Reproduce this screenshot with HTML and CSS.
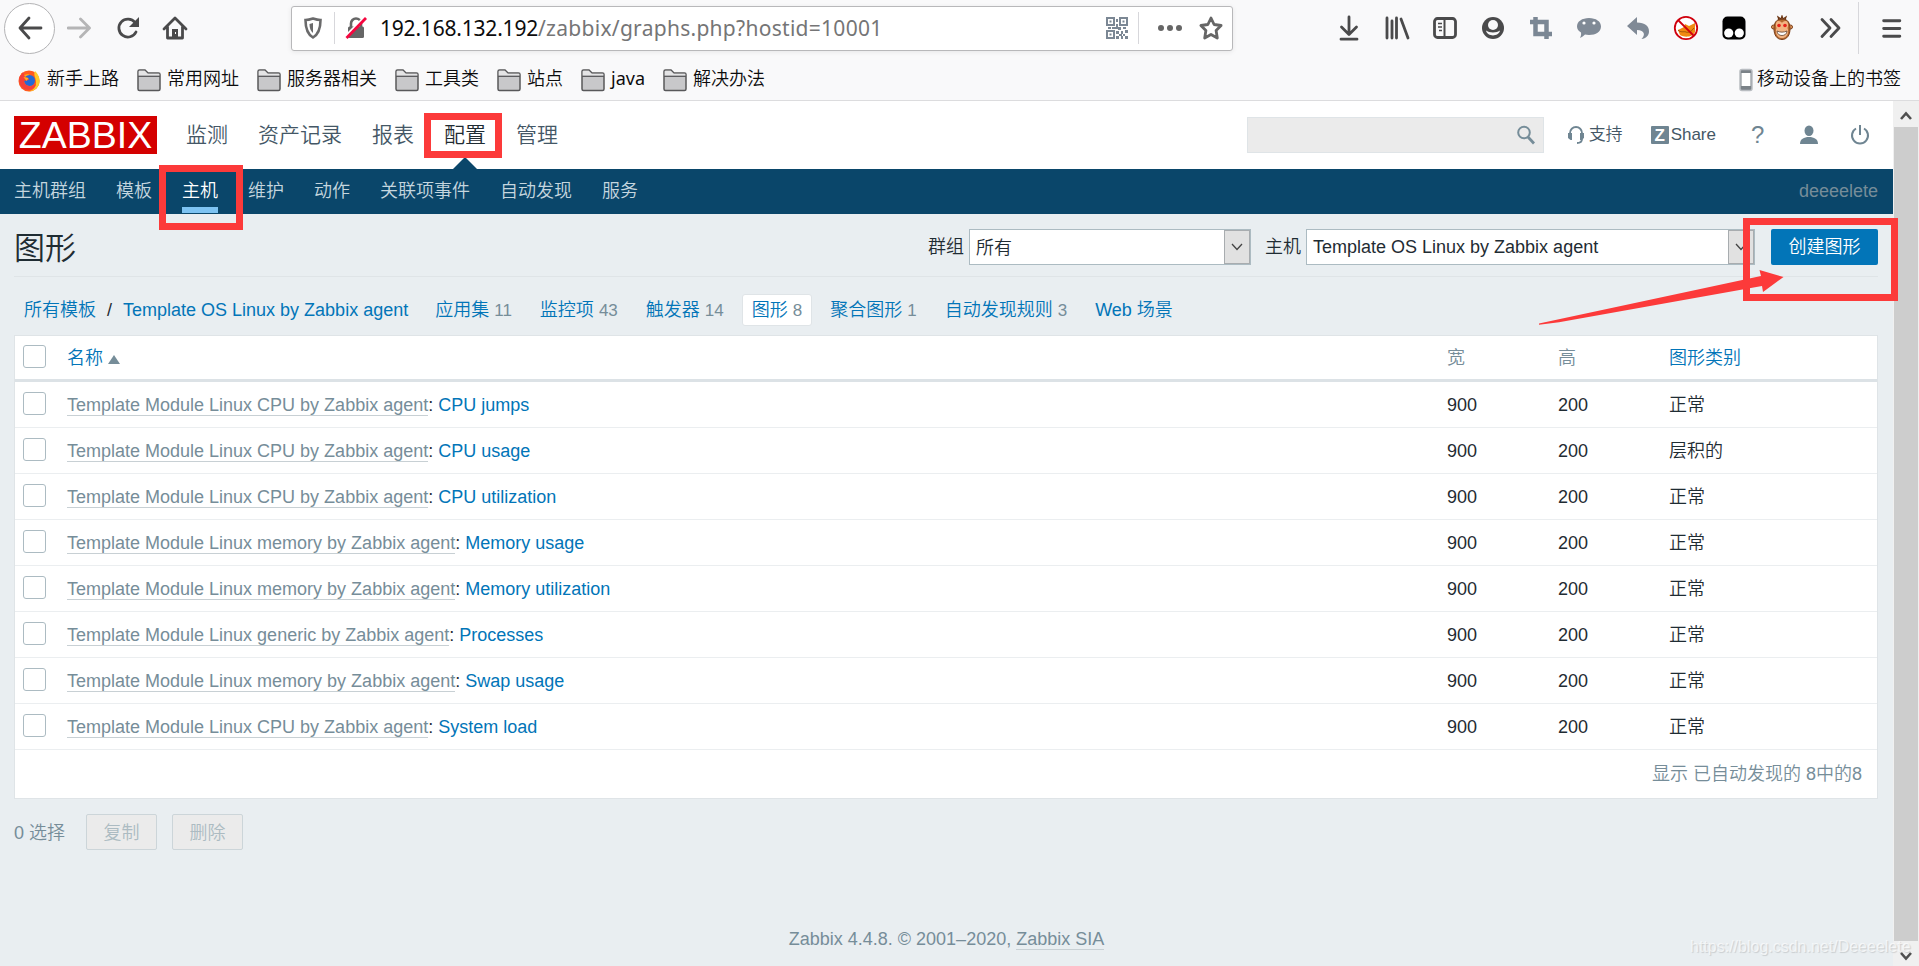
FILE: index.html
```
<!DOCTYPE html>
<html lang="zh-CN">
<head>
  <meta charset="UTF-8">
  <meta name="viewport" content="width=device-width, initial-scale=1.0">
  <title>图形</title>

  <link rel="stylesheet" href="styles.css">
</head>
<body>
  <div class="browser">
    <div class="toolbar">
      <span class="back-btn">
        <svg width="26" height="26" viewBox="0 0 26 26"><path d="M24 13H3M12 3L3 13l9 10" class="line dark w3"/></svg>
      </span>
      <svg class="forward" width="26" height="26" viewBox="0 0 26 26"><path d="M1 13h21M13.500 4l9 9-9 9" class="line pale w3"/></svg>
      <svg class="reload" width="26" height="26" viewBox="0 0 26 26"><path d="M20 7.500A9 9 0 1 0 21 17" class="line dark w3"/><path d="M24 2v10H14z" fill="#4a4a4b"/></svg>
      <svg class="home" width="26" height="26" viewBox="0 0 26 26"><path d="M2 14L13 3l11 11M5.500 12v11h15V12" class="line dark w3"/><path d="M10 23v-9h6v9z" fill="#4a4a4b"/><path d="M13.500 17v2" stroke="#fff" stroke-width="1"/></svg>

      <div class="url-bar">
        <svg class="shield" width="20" height="22" viewBox="0 0 20 22"><path d="M10 1.500c3 1 5 1.500 7.500 1.500 0 8-1.500 14-7.500 17.500C4 17 2.500 11 2.500 3 5 3 7 2.500 10 1.500z" fill="none" stroke="#6a6a6b" stroke-width="2.600"/><path d="M10 6v10c-2.500-2-3.500-5-3.500-9z" fill="#6a6a6b"/></svg>
        <span class="url-sep"></span>
        <svg class="lock" width="24" height="24" viewBox="0 0 24 24"><path d="M7 11V7.500a5 5 0 0 1 10 0V11" fill="none" stroke="#666" stroke-width="2.600"/><rect x="4" y="10.500" width="16" height="11.500" rx="1.500" fill="#666"/><path d="M1 21L20 2" stroke="#fff" stroke-width="3"/><path d="M2.500 22L22 2" stroke="#f5063f" stroke-width="2.800"/></svg>
        <span class="url"><b>192.168.132.192</b>/zabbix/graphs.php?hostid=10001</span>
        <svg class="qr" width="22" height="22" viewBox="0 0 22 22">
          <g fill="none" stroke="#7b8794" stroke-width="2"><path d="M1 1h7v7H1zM14 1h7v7h-7zM1 14h7v7H1z"/></g>
          <path fill="#7b8794" d="M3.500 3.500h2v2h-2zM16.500 3.500h2v2h-2zM3.500 16.500h2v2h-2zM10 2h2v3h-2zM10 7h2v5h-2zM2 10h3v2H2zM6 10h4v2H6zM12 10h3v3h-3zM17 10h3v2h-3zM10 14h3v3h-3zM15 14h2v3h-2zM19 13h3v3h-3zM13 17h3v2h-3zM10 19h3v3h-3zM17 17h2v2h-2zM15 19h2v3h-2zM19 19h3v3h-3z"/>
        </svg>
        <span class="url-sep"></span>
        <svg class="dots" width="26" height="8" viewBox="0 0 26 8"><g fill="#666"><circle cx="4" cy="4" r="3"/><circle cx="13" cy="4" r="3"/><circle cx="22" cy="4" r="3"/></g></svg>
        <svg class="star" width="26" height="26" viewBox="0 0 26 26"><path d="M13 3l3.100 6.500 7 1-5 5 1.200 7.500L13 19.500 6.700 23l1.200-7.500-5-5 7-1z" class="line w3" stroke="#666"/></svg>
      </div>

      <div class="tools">
        <svg viewBox="0 0 26 26"><path d="M13 2v17M5.500 12l7.500 7.500 7.500-7.500M5 24.200h16" class="line dark w3"/></svg>
        <svg viewBox="0 0 26 26"><path d="M3 3v20M8 6v17M12.500 3v20M17 4l7 19" class="line dark w3"/></svg>
        <svg viewBox="0 0 26 26"><rect x="2.500" y="3.500" width="21" height="19" rx="3" class="line dark w3"/><path d="M12.500 4v18" stroke="#4a4a4b" stroke-width="2"/><path d="M6 8.500h4M6 12h4M7 15.500h3" stroke="#4a4a4b" stroke-width="1.400"/></svg>
        <svg viewBox="0 0 26 26"><circle cx="13" cy="13" r="11" fill="#4a4a4b"/><circle cx="13" cy="10" r="5" fill="#f9f9fa"/><path d="M6 15.500c1.500 6.500 12.500 6.500 14 0-3 2.500-11 2.500-14 0z" fill="#f9f9fa"/></svg>
        <svg viewBox="0 0 26 26"><path d="M7.500 2v17H24M2 7h16.500v17" fill="none" stroke="#7b8794" stroke-width="4.500"/></svg>
        <svg viewBox="0 0 26 26"><path d="M13 3c7 0 12 3.500 12 8.500S20 20 13 20c-1.500 0-3-.2-4-.5C7.500 21 6 22 4 23c1-2 1.300-3.500 1-5.500-2.500-1.500-4-3.500-4-6C1 6.500 6 3 13 3z" fill="#808a96"/><circle cx="8" cy="8" r="1.600" fill="#fff"/><circle cx="18" cy="8" r="1.600" fill="#fff"/></svg>
        <svg viewBox="0 0 26 26"><path d="M12 2v5.500c8 0 12 3.500 12 9 0 4-3 7-7.500 7.500 4-3.500 3.500-9-4.500-9V20L2 11z" fill="#808a96"/></svg>
        <svg viewBox="0 0 26 26"><circle cx="13" cy="13" r="11.200" fill="#fff"/><path d="M5 15l6-3 1-3 4 2 6-3v9c-2 5-10 6-15 3z" fill="#f08a12"/><path d="M5 15c3 3 6 1 8 2s5 0 8-4" fill="none" stroke="#9c5308" stroke-width="1"/><circle cx="13" cy="13" r="11.200" fill="none" stroke="#d0000d" stroke-width="1.800"/><path d="M5 5l16 16" stroke="#d0000d" stroke-width="1.800"/></svg>
        <svg viewBox="0 0 26 26"><rect x="1.500" y="1.500" width="23" height="23" rx="5" fill="#000"/><circle cx="7.700" cy="18" r="4.600" fill="#fff"/><circle cx="18.300" cy="18" r="4.600" fill="#fff"/></svg>
        <svg viewBox="0 0 26 26"><circle cx="4.500" cy="12" r="2" fill="#e59a5e" stroke="#7a401b"/><circle cx="21.500" cy="12" r="2" fill="#e59a5e" stroke="#7a401b"/><path d="M13 4c6 0 8 4 8 10s-3 10.500-8 10.500S5 20 5 14s2-10 8-10z" fill="#b5682f" stroke="#7a401b"/><path d="M9.500 6c2 0 3 1 3.500 2 .5-1 1.500-2 3.500-2 3 0 3 5 2 7 2 5-1 10-5.500 10S5.500 18 7.500 13c-1-2-1-7 2-7z" fill="#f2b482"/><path d="M10 5l-1-3 3 2 1-3 1 3 3-2-1 3" fill="none" stroke="#6b3512" stroke-width="1.200"/><circle cx="10" cy="10.500" r="1.800" fill="#e5231b"/><circle cx="16" cy="10.500" r="1.800" fill="#e5231b"/><path d="M8 16c3 1.500 7 1.500 10 0 0 6-10 6-10 0z" fill="#fff" stroke="#60402b" stroke-width=".8"/></svg>
        <svg viewBox="0 0 26 26"><path d="M5 4.500l8 8.500-8 8.500M14 4.500l8 8.500-8 8.500" class="line dark w3"/></svg>
      </div>
      <svg class="menu" width="26" height="50" viewBox="0 0 26 50"><path d="M5 18h15.500M5 25.500h15.500M5 33h15.500" class="line dark w3"/></svg>
    </div>

    <div class="bookmarks">
      <span class="bookmark">
        <svg class="fox" width="24" height="24" viewBox="0 0 24 24"><circle cx="12" cy="13" r="10.500" fill="#ff5a1f"/><path d="M18 3c4 4 5 8 4.500 12C21 21 16 23.500 11 23.500c5-1 8-4 8-9 0-5-3-7-1-11.500z" fill="#ffca28"/><path d="M4 5l3 2 4-1 5 3 1 6-4 4H8l-4-5z" fill="#ffa51a"/><circle cx="12.500" cy="12.500" r="5.500" fill="#2468d6"/><path d="M3 8c-2 5 0 10 4 13 5 2 11 0 12-5-5 4-11 2-12-3l5-1c0-2-2-3-4-3L6 4z" fill="#f5403a"/><path d="M6.500 9l5 1-2 3z" fill="#ffb21c"/></svg>
        <span>新手上路</span>
      </span>
      <span class="bookmark"><svg width="24" height="24" viewBox="0 0 24 24"><use href="#folder"/></svg><span>常用网址</span></span>
      <span class="bookmark"><svg width="24" height="24" viewBox="0 0 24 24"><use href="#folder"/></svg><span>服务器相关</span></span>
      <span class="bookmark"><svg width="24" height="24" viewBox="0 0 24 24"><use href="#folder"/></svg><span>工具类</span></span>
      <span class="bookmark"><svg width="24" height="24" viewBox="0 0 24 24"><use href="#folder"/></svg><span>站点</span></span>
      <span class="bookmark latin"><svg width="24" height="24" viewBox="0 0 24 24"><use href="#folder"/></svg><span>java</span></span>
      <span class="bookmark"><svg width="24" height="24" viewBox="0 0 24 24"><use href="#folder"/></svg><span>解决办法</span></span>
      <span class="bookmark mobile"><svg width="14" height="24" viewBox="0 0 14 24"><rect x="1" y="1.500" width="12" height="21" rx="2" fill="#7b8288" stroke="#b9bdc1" stroke-width="1.500"/><path d="M2.500 5h9v13h-9z" fill="#fff"/></svg><span>移动设备上的书签</span></span>
    </div>
  </div>

  <div class="viewport">
    <div class="page">
      <header class="top-nav">
        <a class="logo">ZABBIX</a>
        <ul class="menu-main">
          <li>监测</li>
          <li>资产记录</li>
          <li>报表</li>
          <li class="selected">配置</li>
          <li>管理</li>
        </ul>
        <div class="search">
          <svg width="20" height="20" viewBox="0 0 20 20"><circle cx="8" cy="7.500" r="5.800" fill="none" stroke="#768d99" stroke-width="2"/><path d="M12 12l6 6.500" stroke="#768d99" stroke-width="2.800"/></svg>
        </div>
        <a class="top-link support"><svg width="18" height="20" viewBox="0 0 18 20"><path d="M3 12V8a6 6 0 0 1 12 0v6c0 3-2 4-5 4" fill="none" stroke="#6f8592" stroke-width="1.800"/><path d="M1 8h4v7H3.500L1 13zM13 8h4v5l-2.500 2H13z" fill="#6f8592"/></svg>支持</a>
        <a class="top-link share"><span class="z-icon">Z</span>Share</a>
        <a class="help">?</a>
        <svg class="user" width="20" height="20" viewBox="0 0 20 20"><ellipse cx="10" cy="5.700" rx="4.500" ry="5.200" fill="#6f8592"/><path d="M1 19c0-5 4-7 9-7s9 2 9 7z" fill="#6f8592"/></svg>
        <svg class="power" width="20" height="20" viewBox="0 0 20 20"><path d="M6 3.500a8 8 0 1 0 8 0M10 0v10" fill="none" stroke="#6f8592" stroke-width="2"/></svg>
      </header>

      <nav class="sub-nav">
        <ul>
          <li>主机群组</li>
          <li>模板</li>
          <li class="selected">主机</li>
          <li>维护</li>
          <li>动作</li>
          <li>关联项事件</li>
          <li>自动发现</li>
          <li>服务</li>
        </ul>
        <span class="server-name">deeeelete</span>
      </nav>

      <main>
        <div class="header-title">
          <h1>图形</h1>
          <label>群组</label>
          <div class="select group-select"><span>所有</span><i><svg width="12" height="8" viewBox="0 0 12 8"><path d="M1 1l5 5.500L11 1" fill="none" stroke="#444" stroke-width="1.300"/></svg></i></div>
          <label>主机</label>
          <div class="select host-select"><span>Template OS Linux by Zabbix agent</span><i><svg width="12" height="8" viewBox="0 0 12 8"><path d="M1 1l5 5.500L11 1" fill="none" stroke="#444" stroke-width="1.300"/></svg></i></div>
          <button class="btn-create">创建图形</button>
        </div>

        <div class="breadcrumbs">
          <a>所有模板</a>
          <span class="slash">/</span>
          <a class="template">Template OS Linux by Zabbix agent</a>
          <span class="tab"><a>应用集</a> <sub>11</sub></span>
          <span class="tab"><a>监控项</a> <sub>43</sub></span>
          <span class="tab"><a>触发器</a> <sub>14</sub></span>
          <span class="tab active"><a>图形</a> <sub>8</sub></span>
          <span class="tab"><a>聚合图形</a> <sub>1</sub></span>
          <span class="tab"><a>自动发现规则</a> <sub>3</sub></span>
          <span class="tab"><a>Web 场景</a></span>
        </div>

        <table class="list-table">
          <thead>
            <tr>
              <th class="col-check"><span class="checkbox"></span></th>
              <th><a>名称</a><span class="arrow-up"></span></th>
              <th class="col-size">宽</th>
              <th class="col-size">高</th>
              <th class="col-type"><a>图形类别</a></th>
            </tr>
          </thead>
          <tbody>
            <tr>
              <td><span class="checkbox"></span></td>
              <td><span class="link-alt">Template Module Linux CPU by Zabbix agent</span>: <a>CPU jumps</a></td>
              <td>900</td><td>200</td><td>正常</td>
            </tr>
            <tr>
              <td><span class="checkbox"></span></td>
              <td><span class="link-alt">Template Module Linux CPU by Zabbix agent</span>: <a>CPU usage</a></td>
              <td>900</td><td>200</td><td>层积的</td>
            </tr>
            <tr>
              <td><span class="checkbox"></span></td>
              <td><span class="link-alt">Template Module Linux CPU by Zabbix agent</span>: <a>CPU utilization</a></td>
              <td>900</td><td>200</td><td>正常</td>
            </tr>
            <tr>
              <td><span class="checkbox"></span></td>
              <td><span class="link-alt">Template Module Linux memory by Zabbix agent</span>: <a>Memory usage</a></td>
              <td>900</td><td>200</td><td>正常</td>
            </tr>
            <tr>
              <td><span class="checkbox"></span></td>
              <td><span class="link-alt">Template Module Linux memory by Zabbix agent</span>: <a>Memory utilization</a></td>
              <td>900</td><td>200</td><td>正常</td>
            </tr>
            <tr>
              <td><span class="checkbox"></span></td>
              <td><span class="link-alt">Template Module Linux generic by Zabbix agent</span>: <a>Processes</a></td>
              <td>900</td><td>200</td><td>正常</td>
            </tr>
            <tr>
              <td><span class="checkbox"></span></td>
              <td><span class="link-alt">Template Module Linux memory by Zabbix agent</span>: <a>Swap usage</a></td>
              <td>900</td><td>200</td><td>正常</td>
            </tr>
            <tr>
              <td><span class="checkbox"></span></td>
              <td><span class="link-alt">Template Module Linux CPU by Zabbix agent</span>: <a>System load</a></td>
              <td>900</td><td>200</td><td>正常</td>
            </tr>
          </tbody>
        </table>
        <div class="table-stats">显示 已自动发现的 8中的8</div>

        <div class="action-buttons">
          <span>0 选择</span>
          <button disabled>复制</button>
          <button disabled>删除</button>
        </div>
      </main>

      <footer>Zabbix 4.4.8. © 2001–2020, <span class="link-alt">Zabbix SIA</span></footer>
    </div>

    <div class="scrollbar">
      <svg width="24" height="26" viewBox="0 0 24 26"><path d="M7 18l5-5.500 5 5.500" fill="none" stroke="#505050" stroke-width="2.600"/></svg>
      <div class="thumb"></div>
      <svg width="24" height="25" viewBox="0 0 24 25"><path d="M7 12l5 5.500 5-5.500" fill="none" stroke="#505050" stroke-width="2.600"/></svg>
    </div>
  </div>

  <!-- red marks on top of the page -->
  <div class="mark mark-config"></div>
  <div class="mark mark-hosts"></div>
  <div class="mark mark-create"></div>
  <svg class="mark-arrow" width="250" height="60" viewBox="1537 268 250 60"><path d="M1539 323.500v1.200l20-2.500L1762 286l1 6 20.500-15-24-7 1.500 6z" fill="#fc3a3a"/></svg>
  <div class="watermark">https://blog.csdn.net/Deeeelete</div>

  <svg width="0" height="0" class="defs">
    <symbol id="folder" viewBox="0 0 24 24"><path d="M1 21V3.500Q1 2 2.500 2H8l3 3h10.500Q23 5 23 6.500V21q0 1.500-1.500 1.500h-19Q1 22.500 1 21z" fill="#c8c8ca" stroke="#58585a" stroke-width="1.500"/><path d="M1.700 8V3.500Q1.700 2.800 2.500 2.800H7.700l3 3h11.600V8z" fill="#e4e4e5"/><path d="M1 8.300h22" stroke="#58585a" stroke-width="1.300"/></symbol>
  </svg>
</body>
</html>
```
FILE: styles.css
```
* {
  box-sizing: border-box;
  margin: 0;
  padding: 0;
}

body {
  width: 1919px;
  height: 966px;
  overflow: hidden;
  position: relative;
  font-family: 'Liberation Sans', 'Noto Sans CJK SC', sans-serif;
  font-size: 18px;
  font-weight: 350;
  line-height: 24px;
  color: #1f2c33;
  background-color: #f9f9fa;
}

svg {
  display: block;
  flex: none;
}

ul {
  display: flex;
  list-style: none;
}

a {
  color: #0275b8;
}

.line {
  fill: none;
  stroke-linecap: round;
  stroke-linejoin: round;
}

.dark {
  stroke: #4a4a4b;
}

.pale {
  stroke: #b5b5b6;
}

.w3 {
  stroke-width: 2.8;
}

.defs {
  position: absolute;
}

/* browser chrome */
.browser {
  height: 101px;
  border-bottom: 1px solid #dcdcde;
  white-space: nowrap;
}

.toolbar {
  display: flex;
  align-items: center;
  height: 56px;
  padding-left: 4px;
}

.back-btn {
  display: flex;
  align-items: center;
  justify-content: center;
  width: 51px;
  height: 51px;
  border: 1px solid #b3b3b5;
  border-radius: 50%;
  background-color: #fff;
}

.forward {
  margin-left: 12px;
}

.reload {
  margin-left: 22px;
}

.home {
  margin-left: 21px;
}

.url-bar {
  display: flex;
  align-items: center;
  width: 942px;
  height: 45px;
  margin-left: 103px;
  padding-left: 11px;
  border: 1px solid #b8b8ba;
  border-radius: 3px;
  background-color: #fff;
  box-shadow: 0 1px 5px rgba(0, 0, 0, 0.08);
}

.url-sep {
  width: 1px;
  height: 32px;
  margin-left: 11px;
  background-color: #d7d7db;
}

.lock {
  margin-left: 9px;
}

.url {
  flex: 1;
  padding-left: 12px;
  font-family: 'Noto Sans', sans-serif;
  font-size: 21px;
  font-weight: 400;
  letter-spacing: 0.28px;
  color: #757576;
}

.url b {
  font-weight: 400;
  letter-spacing: -0.2px;
  color: #0c0c0d;
}

.url + .qr {
  margin-right: -1px;
}

.dots {
  margin-left: 18px;
}

.star {
  margin: 0 8px 0 15px;
}

.tools {
  display: flex;
  width: 625px;
  padding-left: 103px;
  gap: 22.1px;
}

.tools svg {
  width: 26px;
  height: 26px;
}

.toolbar .menu {
  width: 48px;
  height: 52px;
  padding-left: 19px;
  border-left: 1px solid #d7d7db;
}

.bookmarks {
  display: flex;
  align-items: center;
  height: 45px;
  padding: 2px 18px 0 17px;
  gap: 18px;
  font-family: 'Noto Sans', 'Noto Sans CJK SC', sans-serif;
  font-weight: 350;
  color: #0c0c0d;
}

.bookmark {
  display: flex;
  align-items: center;
  gap: 6px;
}

.bookmark span {
  padding-bottom: 3px;
}

.latin {
  font-weight: 400;
}

.mobile {
  margin-left: auto;
  gap: 4px;
}

/* zabbix page */
.viewport {
  display: flex;
  height: 865px;
}

.page {
  display: flex;
  flex-direction: column;
  width: 1893px;
  background-color: #e9eef1;
}

.top-nav {
  display: flex;
  align-items: center;
  height: 68px;
  padding-left: 14px;
  background-color: #fff;
}

.logo {
  width: 143px;
  height: 38px;
  font-size: 37.5px;
  line-height: 38px;
  text-align: center;
  color: #fff;
  background-color: #d40000;
}

.menu-main {
  gap: 30px;
  margin-left: 29px;
  font-size: 21px;
  line-height: 68px;
  color: #445766;
}

.menu-main .selected {
  position: relative;
  color: #1f2c33;
}

.menu-main .selected::after {
  content: '';
  position: absolute;
  bottom: 0;
  left: 9px;
  border: 12px solid transparent;
  border-top: 0;
  border-bottom: 12px solid #0a466a;
}

.search {
  display: flex;
  align-items: center;
  justify-content: flex-end;
  width: 297px;
  height: 36px;
  margin-left: auto;
  padding-right: 7px;
  border: 1px solid #dfe4e7;
  background-color: #ebebeb;
}

.top-link {
  display: flex;
  align-items: center;
  font-size: 17px;
  color: #445766;
}

.support {
  margin-left: 23px;
  gap: 4px;
}

.share {
  margin-left: 28px;
  gap: 2px;
}

.z-icon {
  width: 18px;
  height: 18px;
  border-radius: 1px;
  font-size: 17px;
  font-weight: 700;
  line-height: 19px;
  text-align: center;
  color: #fff;
  background-color: #6f8592;
}

.help {
  width: 13px;
  margin-left: 35px;
  font-size: 24px;
  color: #6f8592;
}

.user {
  margin-left: 35px;
}

.power {
  margin: 0 23px 0 31px;
}

.sub-nav {
  display: flex;
  justify-content: space-between;
  height: 45px;
  padding: 0 15px 0 14px;
  line-height: 44px;
  color: #c5d6df;
  background-color: #0a466a;
}

.sub-nav ul {
  gap: 30px;
}

.sub-nav .selected {
  height: 44px;
  border-bottom: 6px solid #7dc3f2;
  color: #fff;
}

.server-name {
  color: #768d99;
}

main {
  padding: 0 15px 0 14px;
}

.header-title {
  display: flex;
  align-items: center;
  height: 63px;
  padding-top: 3px;
  border-bottom: 1px solid #dfe4e7;
}

h1 {
  margin-right: auto;
  padding-top: 4px;
  font-size: 31px;
  font-weight: 350;
  line-height: 44px;
}

.select {
  display: flex;
  align-items: center;
  justify-content: space-between;
  height: 36px;
  margin: 0 16px 0 5px;
  padding-left: 6px;
  border: 1px solid #acbbc2;
  background-color: #fff;
}

.group-select {
  width: 282px;
  margin-right: 14px;
}

.group-select span {
  padding-top: 2px;
}

.host-select {
  width: 449px;
}

.select i {
  display: flex;
  align-items: center;
  justify-content: center;
  width: 26px;
  height: 34px;
  border: 1px solid #a8acaf;
  background-color: #e1e1e1;
}

button {
  font: inherit;
}

.btn-create {
  width: 107px;
  height: 36px;
  border: none;
  border-radius: 2px;
  color: #fff;
  background-color: #0275b8;
}

.breadcrumbs {
  display: flex;
  align-items: center;
  height: 58px;
  padding: 8px 0 0 10px;
  white-space: pre;
}

.breadcrumbs .slash {
  padding: 0 11px;
}

.template {
  margin-right: 17px;
}

.tab {
  height: 32px;
  margin-right: 8px;
  padding: 0 10px;
  line-height: 32px;
}

.tab.active {
  padding: 0 9px;
  border: 1px solid #dfe4e7;
  border-radius: 3px;
  background-color: #fff;
  line-height: 30px;
}

.tab sub {
  font-size: 17px;
  vertical-align: baseline;
  color: #768d99;
}

.list-table {
  width: 100%;
  border: 1px solid #dfe4e7;
  border-bottom: none;
  border-spacing: 0;
  table-layout: fixed;
  background-color: #fff;
}

th,
td {
  height: 46px;
  padding-top: 1px;
  border-bottom: 1px solid #ebeef0;
  font-weight: 350;
  text-align: left;
}

th {
  border-bottom: 3px solid #dce2e6;
  color: #768d99;
}

.col-check {
  width: 52px;
}

.col-size {
  width: 111px;
}

.col-type {
  width: 208px;
}

.checkbox {
  display: block;
  width: 23px;
  height: 23px;
  margin: -3px 0 0 8px;
  border: 1px solid #acbbc2;
  border-radius: 3px;
}

.arrow-up {
  display: inline-block;
  margin-left: 5px;
  border: 6px solid transparent;
  border-top: 0;
  border-bottom: 9px solid #768d99;
}

.link-alt {
  border-bottom: 1px solid #c8d0d4;
  color: #768d99;
}

.table-stats {
  height: 49px;
  padding-right: 15px;
  border: 1px solid #dfe4e7;
  border-top: none;
  line-height: 48px;
  text-align: right;
  color: #768d99;
  background-color: #fff;
}

.action-buttons {
  display: flex;
  align-items: center;
  gap: 15px;
  margin-top: 15px;
  color: #768d99;
}

.action-buttons span {
  margin-right: 6px;
  padding-top: 2px;
}

.action-buttons button {
  width: 71px;
  height: 36px;
  padding-top: 1px;
  border: 1px solid #ccd5d9;
  border-radius: 2px;
  color: #acbbc2;
  background-color: #ebebeb;
}

footer {
  margin-top: auto;
  padding-bottom: 15px;
  text-align: center;
  color: #768d99;
}

.scrollbar {
  display: flex;
  flex-direction: column;
  width: 26px;
  padding: 0 1px;
  background-color: #f0f0f0;
}

.thumb {
  flex: 1;
  background-color: #cdcdcd;
}

/* annotations */
.mark {
  position: absolute;
  border: 7px solid #fc3a3a;
}

.mark-config {
  left: 424px;
  top: 113px;
  width: 78px;
  height: 45px;
}

.mark-hosts {
  left: 159px;
  top: 165px;
  width: 84px;
  height: 65px;
}

.mark-create {
  left: 1743px;
  top: 218px;
  width: 155px;
  height: 83px;
}

.mark-arrow {
  position: absolute;
  left: 1537px;
  top: 268px;
}

.watermark {
  position: absolute;
  left: 1690px;
  top: 935px;
  font-size: 16px;
  color: rgba(255, 255, 255, 0.65);
  text-shadow: 1px 1px 1px rgba(0, 0, 0, 0.14);
}
```
